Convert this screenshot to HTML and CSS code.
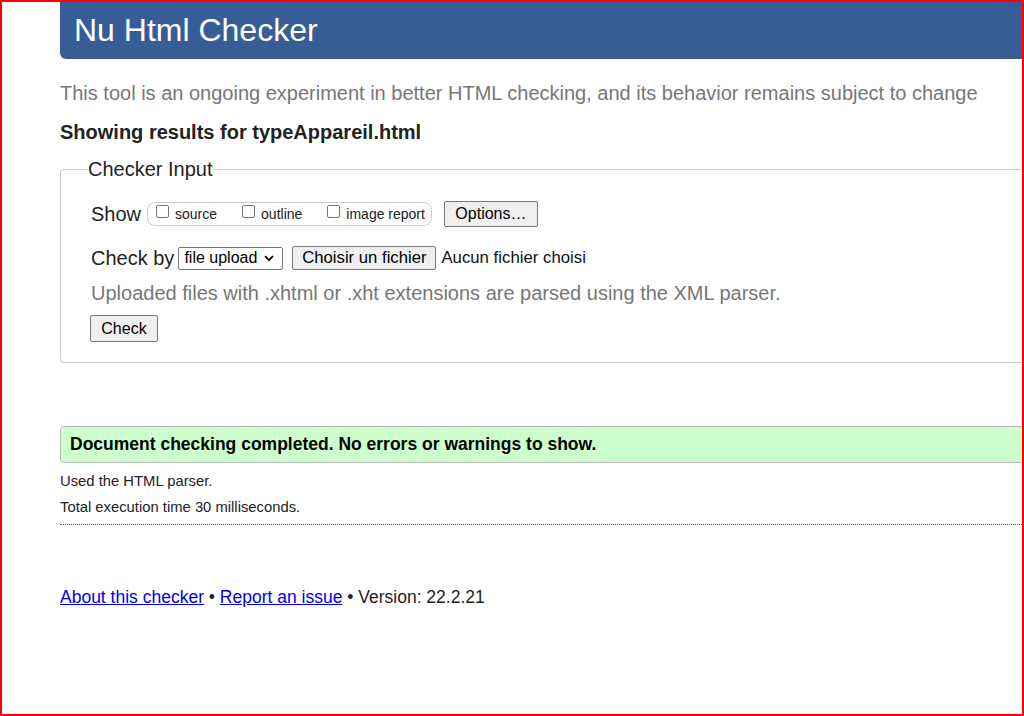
FILE: index.html
```html
<!DOCTYPE html>
<html lang="en">
<head>
<meta charset="utf-8">
<title>Nu Html Checker</title>
<link rel="stylesheet" href="styles.css">
</head>
<body>
<div class="frame">
  <div class="page">
    <h1 class="title">Nu Html Checker</h1>
    <p class="intro">This tool is an ongoing experiment in better HTML checking, and its behavior remains subject to change</p>
    <h2 class="showing">Showing results for typeAppareil.html</h2>
    <fieldset class="input">
      <legend class="legend">Checker Input</legend>
      <div class="row">
        <span class="label">Show</span>
        <span class="group">
          <span class="opt"><span class="cb"></span>source</span>
          <span class="opt"><span class="cb"></span>outline</span>
          <span class="opt"><span class="cb"></span>image report</span>
        </span>
        <span class="btn options">Options…</span>
      </div>
      <div class="row">
        <span class="label">Check by</span>
        <span class="select">file upload<svg class="chev" width="10" height="7" viewBox="0 0 10 7"><path d="M1 1.2 L5 5.2 L9 1.2" fill="none" stroke="#000" stroke-width="1.8"/></svg></span>
        <span class="btn choose">Choisir un fichier</span>
        <span class="nofile">Aucun fichier choisi</span>
      </div>
      <p class="hint">Uploaded files with .xhtml or .xht extensions are parsed using the XML parser.</p>
      <span class="btn check">Check</span>
    </fieldset>
    <div class="success">Document checking completed. No errors or warnings to show.</div>
    <p class="meta first">Used the HTML parser.</p>
    <p class="meta">Total execution time 30 milliseconds.</p>
    <hr class="dotted">
    <p class="footer"><a href="#" class="link">About this checker</a> • <a href="#" class="link">Report an issue</a> • Version: 22.2.21</p>
  </div>
</div>
</body>
</html>
```
FILE: styles.css
```css
html, body {
  margin: 0;
  padding: 0;
  background: #fff;
}
body {
  font-family: "Liberation Sans", Arial, sans-serif;
  color: #222;
}
.frame {
  box-sizing: border-box;
  width: 1024px;
  height: 716px;
  border: 2px solid #ff0000;
  overflow: hidden;
}
.page {
  margin-left: 58px;
  width: 1100px;
}
.title {
  margin: 0;
  height: 57px;
  line-height: 56px;
  padding-left: 14px;
  background: #365d95;
  color: #fff;
  font-size: 32px;
  font-weight: normal;
  border-bottom-left-radius: 6px;
}
.intro {
  margin: 22px 0 0;
  font-size: 20px;
  line-height: 24px;
  color: #777;
}
.showing {
  margin: 16px 0 0;
  font-size: 20px;
  line-height: 22px;
  font-weight: bold;
  color: #222;
}
.input {
  margin: 15px 0 0;
  padding: 0 0 20px 27px;
  border: 1px solid #ccc;
  border-radius: 4px;
}
.legend {
  padding: 0;
  font-size: 20px;
  line-height: 22px;
  color: #222;
}
.row {
  display: flex;
  align-items: center;
  height: 28px;
  padding-left: 3px;
  margin-top: 20px;
}
.row + .row {
  margin-top: 16px;
}
.label {
  font-size: 20px;
  margin-right: 6px;
}
.row .label + .select {
  margin-left: -2px;
}
.group {
  display: flex;
  align-items: flex-start;
  height: 22px;
  border: 1px solid #ccc;
  border-radius: 8px;
  padding: 0 6px 0 7px;
  font-size: 14px;
}
.opt {
  display: flex;
  align-items: flex-start;
  line-height: 22px;
  margin-right: 24px;
}
.opt:last-child {
  margin-right: 0;
}
.cb {
  box-sizing: border-box;
  width: 13px;
  height: 13px;
  border: 1px solid #767676;
  border-radius: 2px;
  margin: 2px 6px 0 1px;
  background: #fff;
}
.btn {
  box-sizing: border-box;
  display: inline-flex;
  align-items: center;
  justify-content: center;
  background: #efefef;
  border: 1px solid #767676;
  border-radius: 2px;
  font-size: 16px;
  color: #000;
}
.options {
  width: 94px;
  height: 26px;
  margin-left: 12px;
}
.select {
  box-sizing: border-box;
  display: inline-flex;
  align-items: center;
  width: 105px;
  height: 23px;
  padding-left: 5px;
  border: 1px solid #767676;
  border-radius: 2px;
  font-size: 16px;
  color: #000;
  background: #fff;
}
.chev {
  margin-left: 7px;
}
.choose {
  width: 144px;
  height: 24px;
  margin-left: 9px;
  font-size: 16.7px;
}
.nofile {
  font-size: 16.8px;
  margin-left: 5px;
  color: #111;
}
.hint {
  margin: 9px 0 0 3px;
  font-size: 20px;
  line-height: 24px;
  color: #777;
}
.check {
  width: 68px;
  height: 27px;
  margin: 10px 0 0 2px;
}
.success {
  margin-top: 63px;
  height: 37px;
  box-sizing: border-box;
  line-height: 35px;
  padding-left: 9px;
  background: #ccffcc;
  border: 1px solid #bbb;
  border-radius: 4px;
  font-size: 17.5px;
  font-weight: bold;
  color: #000;
}
.meta {
  margin: 8px 0 0;
  font-size: 14.8px;
  line-height: 18px;
  color: #222;
}
.meta.first {
  margin-top: 9px;
}
.dotted {
  margin: 8px 0 0;
  border: 0;
  border-top: 1px dotted #555;
  height: 0;
}
.footer {
  margin: 61px 0 0;
  font-size: 17.5px;
  line-height: 22px;
  color: #222;
}
.link {
  color: #0000ee;
}
```
